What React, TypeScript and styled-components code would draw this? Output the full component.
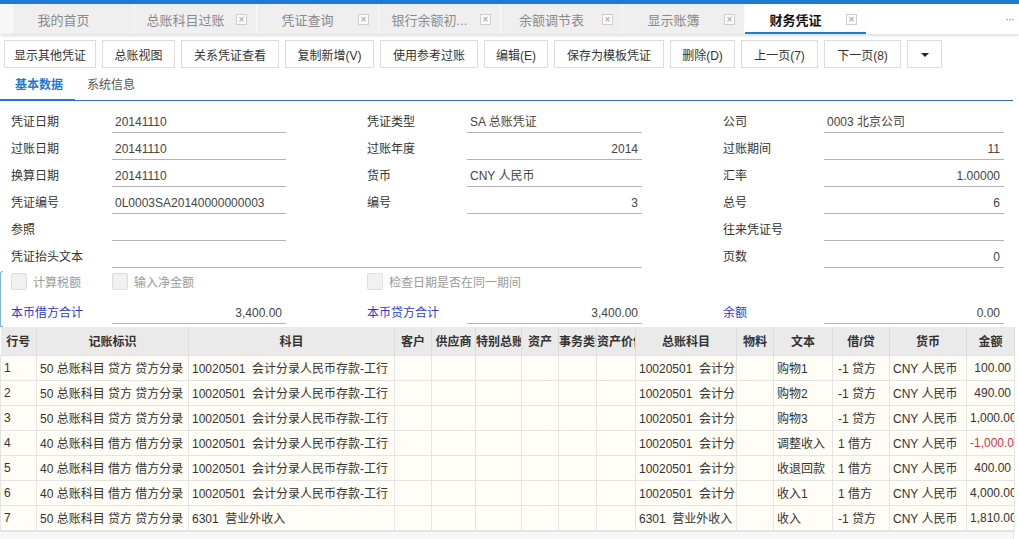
import React from 'react';
import styled, { createGlobalStyle } from 'styled-components';

const FONT = `"Liberation Sans", "Noto Sans CJK SC", sans-serif`;
const BLUE = '#1f7ad3';

const GlobalStyle = createGlobalStyle`
    html, body {
        margin: 0;
        padding: 0;
        background: #fff;
    }
    body {
        font-family: ${FONT};
        color: #333;
    }
    * {
        box-sizing: border-box;
    }
`;

const tabs = [
    { label: '我的首页', closable: false },
    { label: '总账科目过账', closable: true },
    { label: '凭证查询', closable: true },
    { label: '银行余额初...', closable: true },
    { label: '余额调节表', closable: true },
    { label: '显示账簿', closable: true },
    { label: '财务凭证', closable: true, active: true },
];

const buttons = [
    { label: '显示其他凭证', w: 92 },
    { label: '总账视图', w: 73 },
    { label: '关系凭证查看', w: 98 },
    { label: '复制新增(V)', w: 89 },
    { label: '使用参考过账', w: 98 },
    { label: '编辑(E)', w: 64 },
    { label: '保存为模板凭证', w: 110 },
    { label: '删除(D)', w: 65 },
    { label: '上一页(7)', w: 77 },
    { label: '下一页(8)', w: 77 },
];

const columns = [
    { title: '行号', w: 36 },
    { title: '记账标识', w: 152 },
    { title: '科目', w: 206 },
    { title: '客户', w: 37 },
    { title: '供应商', w: 44 },
    { title: '特别总账', w: 46 },
    { title: '资产', w: 37 },
    { title: '事务类型', w: 38 },
    { title: '资产价值', w: 39 },
    { title: '总账科目', w: 101 },
    { title: '物料', w: 37 },
    { title: '文本', w: 59 },
    { title: '借/贷', w: 57 },
    { title: '货币', w: 77 },
    { title: '金额', w: 48 },
];

const BANK = '10020501  会计分录人民币存款-工行';
const INCOME = '6301  营业外收入';
const CR = '50 总账科目 贷方 贷方分录';
const DR = '40 总账科目 借方 借方分录';

const rows = [
    { no: '1', key: CR, acct: BANK, text: '购物1', dc: '-1 贷方', amount: '100.00' },
    { no: '2', key: CR, acct: BANK, text: '购物2', dc: '-1 贷方', amount: '490.00' },
    { no: '3', key: CR, acct: BANK, text: '购物3', dc: '-1 贷方', amount: '1,000.00' },
    { no: '4', key: DR, acct: BANK, text: '调整收入', dc: '1 借方', amount: '-1,000.00' },
    { no: '5', key: DR, acct: BANK, text: '收退回款', dc: '1 借方', amount: '400.00' },
    { no: '6', key: DR, acct: BANK, text: '收入1', dc: '1 借方', amount: '4,000.00' },
    { no: '7', key: CR, acct: INCOME, text: '收入', dc: '-1 贷方', amount: '1,810.00' },
];

export default function App() {
    return (
        <Page>
            <GlobalStyle />
            <TopStripe />
            <TabBar>
                <TabLead />
                {tabs.map((t) => (
                    <Tab key={t.label} $active={!!t.active}>
                        <TabLabel $active={!!t.active}>{t.label}</TabLabel>
                        <TabClose $hidden={!t.closable}>×</TabClose>
                    </Tab>
                ))}
                <TabRest>
                    <MoreDots>···</MoreDots>
                </TabRest>
            </TabBar>

            <Toolbar>
                {buttons.map((b) => (
                    <ToolButton key={b.label} $w={b.w}>
                        {b.label}
                    </ToolButton>
                ))}
                <ToolButton $w={35}>
                    <Caret />
                </ToolButton>
            </Toolbar>

            <SubTabs>
                <SubTab $active $first>
                    基本数据
                </SubTab>
                <SubTab>系统信息</SubTab>
            </SubTabs>

            <Form>
                <FormRow>
                    <Label $col={1}>凭证日期</Label>
                    <Field $col={2}>20141110</Field>
                    <Label $col={4}>凭证类型</Label>
                    <Field $col={5}>SA 总账凭证</Field>
                    <Label $col={7}>公司</Label>
                    <Field $col={8}>0003 北京公司</Field>
                </FormRow>
                <FormRow>
                    <Label $col={1}>过账日期</Label>
                    <Field $col={2}>20141110</Field>
                    <Label $col={4}>过账年度</Label>
                    <Field $col={5} $right>
                        2014
                    </Field>
                    <Label $col={7}>过账期间</Label>
                    <Field $col={8} $right>
                        11
                    </Field>
                </FormRow>
                <FormRow>
                    <Label $col={1}>换算日期</Label>
                    <Field $col={2}>20141110</Field>
                    <Label $col={4}>货币</Label>
                    <Field $col={5}>CNY 人民币</Field>
                    <Label $col={7}>汇率</Label>
                    <Field $col={8} $right>
                        1.00000
                    </Field>
                </FormRow>
                <FormRow>
                    <Label $col={1}>凭证编号</Label>
                    <Field $col={2}>0L0003SA20140000000003</Field>
                    <Label $col={4}>编号</Label>
                    <Field $col={5} $right>
                        3
                    </Field>
                    <Label $col={7}>总号</Label>
                    <Field $col={8} $right>
                        6
                    </Field>
                </FormRow>
                <FormRow>
                    <Label $col={1}>参照</Label>
                    <Field $col={2} />
                    <Label $col={7}>往来凭证号</Label>
                    <Field $col={8} />
                </FormRow>
                <FormRow>
                    <Label $col={1}>凭证抬头文本</Label>
                    <Field $col={2} $span={4} />
                    <Label $col={7}>页数</Label>
                    <Field $col={8} $right>
                        0
                    </Field>
                </FormRow>
                <CheckRow>
                    <Check $col={1}>
                        <Box />
                        计算税额
                    </Check>
                    <Check $col={2}>
                        <Box />
                        输入净金额
                    </Check>
                    <Check $col={4} $span={3}>
                        <Box />
                        检查日期是否在同一期间
                    </Check>
                </CheckRow>
                <TotalRow>
                    <Label $col={1} $blue>
                        本币借方合计
                    </Label>
                    <Field $col={2} $right>
                        3,400.00
                    </Field>
                    <Label $col={4} $blue>
                        本币贷方合计
                    </Label>
                    <Field $col={5} $right>
                        3,400.00
                    </Field>
                    <Label $col={7} $blue>
                        余额
                    </Label>
                    <Field $col={8} $right>
                        0.00
                    </Field>
                </TotalRow>
                <FocusEdge />
            </Form>

            <GridArea>
                <Grid>
                    <colgroup>
                        {columns.map((c) => (
                            <col key={c.title} style={{ width: c.w }} />
                        ))}
                    </colgroup>
                    <thead>
                        <tr>
                            {columns.map((c) => (
                                <Th key={c.title}>
                                    <Clip>{c.title}</Clip>
                                </Th>
                            ))}
                        </tr>
                    </thead>
                    <tbody>
                        {rows.map((r) => (
                            <tr key={r.no}>
                                <Td>{r.no}</Td>
                                <Td>{r.key}</Td>
                                <Td>{r.acct}</Td>
                                <Td />
                                <Td />
                                <Td />
                                <Td />
                                <Td />
                                <Td />
                                <Td>
                                    <Clip>{r.acct}</Clip>
                                </Td>
                                <Td />
                                <Td>{r.text}</Td>
                                <Td $pad={5}>{r.dc}</Td>
                                <Td>CNY 人民币</Td>
                                <Td $right $red={r.amount.startsWith('-')}>
                                    {r.amount}
                                </Td>
                            </tr>
                        ))}
                    </tbody>
                </Grid>
                <GridFiller />
            </GridArea>
        </Page>
    );
}

const Page = styled.div`
    width: 1019px;
    height: 539px;
    display: flex;
    flex-direction: column;
    overflow: hidden;
    font-family: ${FONT};
`;

const TopStripe = styled.div`
    height: 4px;
    background: ${BLUE};
`;

const TabBar = styled.div`
    display: flex;
    height: 30px;
    background: #f7f7f7;
    box-shadow: 0 2px 3px rgba(0, 0, 0, 0.13);
    position: relative;
    z-index: 1;
`;

const TabLead = styled.div`
    width: 13px;
`;

const Tab = styled.div<{ $active: boolean }>`
    width: 122px;
    flex: none;
    display: flex;
    align-items: center;
    background: ${(p) => (p.$active ? '#fff' : '#efefef')};
    border-right: 1px solid #fafafa;
    box-shadow: ${(p) => (p.$active ? `inset 0 -2px 0 ${BLUE}` : 'none')};
`;

const TabLabel = styled.span<{ $active: boolean }>`
    flex: 1;
    text-align: center;
    font-size: 13px;
    white-space: nowrap;
    color: ${(p) => (p.$active ? '#111' : '#8a8a8a')};
    font-weight: ${(p) => (p.$active ? 'bold' : 'normal')};
`;

const TabClose = styled.span<{ $hidden: boolean }>`
    width: 11px;
    height: 11px;
    margin: 0 9px 0 0;
    border: 1px solid #cfcfcf;
    background: #fbfbfb;
    color: #999;
    font-size: 10px;
    line-height: 9px;
    text-align: center;
    visibility: ${(p) => (p.$hidden ? 'hidden' : 'visible')};
`;

const TabRest = styled.div`
    flex: 1;
    background: #fff;
    display: flex;
    justify-content: flex-end;
    align-items: center;
`;

const MoreDots = styled.span`
    color: #888;
    font-size: 12px;
    letter-spacing: -1px;
    margin-right: 5px;
`;

const Toolbar = styled.div`
    display: flex;
    gap: 6px;
    padding: 6px 0 0 4px;
`;

const ToolButton = styled.div<{ $w: number }>`
    width: ${(p) => p.$w}px;
    height: 28px;
    border: 1px solid #dcdcdc;
    background: #fff;
    color: #333;
    font-size: 12px;
    display: flex;
    align-items: center;
    justify-content: center;
    white-space: nowrap;
`;

const Caret = styled.span`
    width: 0;
    height: 0;
    border-left: 4px solid transparent;
    border-right: 4px solid transparent;
    border-top: 4px solid #222;
    margin-top: 2px;
`;

const SubTabs = styled.div`
    display: flex;
    height: 33px;
    width: 1013px;
    border-bottom: 1px solid #2d72b8;
`;

const SubTab = styled.div<{ $active?: boolean; $first?: boolean }>`
    display: flex;
    align-items: center;
    padding: 0 12px 0 ${(p) => (p.$first ? 15 : 12)}px;
    font-size: 12px;
    color: ${(p) => (p.$active ? BLUE : '#555')};
    font-weight: ${(p) => (p.$active ? 'bold' : 'normal')};
    border-bottom: 2px solid ${(p) => (p.$active ? BLUE : 'transparent')};
    margin-bottom: -1px;
`;

const Form = styled.div`
    position: relative;
    padding: 8px 0 0 11px;
`;

const FormRow = styled.div`
    display: grid;
    grid-template-columns: 101px 174px 81px 100px 175px 81px 101px 180px;
    height: 27px;
    font-size: 12px;
`;

const CheckRow = styled(FormRow)`
    height: 21px;
    align-items: center;
`;

const TotalRow = styled(FormRow)`
    height: 35px;
    padding-top: 8px;
`;

const Label = styled.div<{ $col: number; $blue?: boolean }>`
    grid-column: ${(p) => p.$col};
    line-height: 27px;
    white-space: nowrap;
    color: ${(p) => (p.$blue ? '#2a3bd0' : '#333')};
`;

const Field = styled.div<{ $col: number; $span?: number; $right?: boolean }>`
    grid-column: ${(p) => p.$col} / span ${(p) => p.$span || 1};
    margin-top: 3px;
    height: 21px;
    line-height: 20px;
    border-bottom: 1px solid #b3b3b3;
    padding: 0 4px 0 3px;
    color: #444;
    white-space: nowrap;
    overflow: hidden;
    text-align: ${(p) => (p.$right ? 'right' : 'left')};
`;

const Check = styled.div<{ $col: number; $span?: number }>`
    grid-column: ${(p) => p.$col} / span ${(p) => p.$span || 1};
    display: flex;
    align-items: center;
    gap: 6px;
    color: #9a9a9a;
    white-space: nowrap;
`;

const Box = styled.span`
    width: 16px;
    height: 17px;
    border: 1px solid #dedede;
    border-radius: 2px;
    background: #f1f1f1;
`;

const FocusEdge = styled.div`
    position: absolute;
    left: 0;
    top: 170px;
    width: 3px;
    height: 56px;
    border: 1px solid #7fb3e6;
    border-right: none;
    border-radius: 3px 0 0 0;
`;

const GridArea = styled.div`
    flex: 1;
    width: 1014px;
    display: flex;
    flex-direction: column;
`;

const Grid = styled.table`
    width: 1014px;
    table-layout: fixed;
    border-collapse: collapse;
    font-size: 12px;
`;

const Clip = styled.div`
    overflow: hidden;
    white-space: pre;
`;

const Th = styled.th`
    height: 28px;
    padding: 0;
    background: #eaeaea;
    border-right: 1px solid #dcdcdc;
    color: #333;
    font-weight: bold;
    text-align: center;
    white-space: nowrap;
    overflow: hidden;
`;

const Td = styled.td<{ $right?: boolean; $red?: boolean; $pad?: number }>`
    height: 25px;
    padding: 0 ${(p) => (p.$right ? 3 : 0)}px 0 ${(p) => p.$pad ?? 3}px;
    background: #fffdf6;
    border: 1px solid #e4e4e4;
    color: ${(p) => (p.$red ? '#e0303c' : '#333')};
    text-align: ${(p) => (p.$right ? 'right' : 'left')};
    white-space: pre;
    overflow: hidden;
`;

const GridFiller = styled.div`
    flex: 1;
    background: #f7f7f7;
    border-top: 1px solid #e4e4e4;
    border-right: 1px solid #e4e4e4;
`;
